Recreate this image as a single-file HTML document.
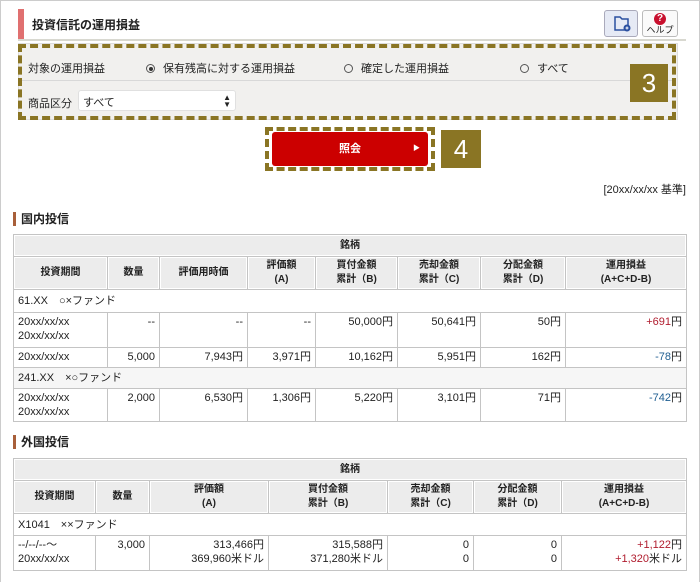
<!DOCTYPE html>
<html><head><meta charset="utf-8"><style>
*{box-sizing:border-box;margin:0;padding:0}
body{width:700px;height:582px;overflow:hidden;background:#fff;font-family:"Liberation Sans","Noto Sans CJK JP",sans-serif;font-size:11px;color:#222;position:relative}
.frame{position:absolute;left:0;top:0;width:700px;height:582px;border:1px solid #ccc;border-bottom:none}
.abs{position:absolute}
table{border-collapse:collapse;table-layout:fixed;position:absolute;left:13px;width:673px}
td,th{border:1px solid #c4c4c4;padding:2px 4px;vertical-align:top;line-height:14px}
th{background:#ececec;font-weight:bold;text-align:center;vertical-align:middle;font-size:10px;box-shadow:inset 0 0 0 1px #fff}
td.r{text-align:right}
.red{color:#b01c2e}.blue{color:#1f5e91}
.dash{border:4px dashed #8a7524}
.num{background:#8a7524;color:#fff;font-size:26px;text-align:center;font-weight:normal}
.sec{font-weight:bold;font-size:12px;border-left:3px solid #a85f3a;padding-left:5px;line-height:14px}
.rad{display:inline-block;width:9px;height:9px;border:1px solid #555;border-radius:50%;vertical-align:-1px;margin-right:8px;position:relative}
.rad.on::after{content:"";position:absolute;left:1.5px;top:1.5px;width:4px;height:4px;background:#333;border-radius:50%}
</style></head><body>
<div class="frame"></div>
<div class="abs" style="left:18px;top:9px;width:6px;height:30px;background:#e07070"></div>
<div class="abs" style="left:32px;top:16px;font-weight:bold;font-size:12px">投資信託の運用損益</div>
<div class="abs" style="left:18px;top:39px;width:668px;height:2px;background:#d8d8d0"></div>
<div class="abs" style="left:604px;top:10px;width:34px;height:27px;border:1px solid #aab;border-radius:3px;background:#e6eaf5">
<svg width="32" height="25" viewBox="0 0 32 25"><path d="M10 6h5l2 2h6v11H10z" fill="none" stroke="#2a4fa0" stroke-width="1.5"/><circle cx="22" cy="17" r="3.5" fill="#2a4fa0"/><path d="M20.5 17h3M22 15.5v3" stroke="#fff" stroke-width="1"/></svg></div>
<div class="abs" style="left:642px;top:10px;width:36px;height:27px;border:1px solid #bbb;border-radius:3px;background:#fafafa;text-align:center">
<div style="width:12px;height:12px;border-radius:50%;background:#c8102e;color:#fff;font-weight:bold;font-size:10px;line-height:12px;margin:2px auto 0">?</div><div style="font-size:9px;line-height:10px">ヘルプ</div></div>
<div class="abs" style="left:18px;top:43px;width:660px;height:77px;background:#f1f0ee;border:1px solid #ddd"></div>
<div class="abs" style="left:22px;top:80px;width:652px;height:1px;background:#d8d8d8"></div>
<div class="abs" style="left:28px;top:60px">対象の運用損益</div>
<div class="abs" style="left:146px;top:60px"><span class="rad on"></span>保有残高に対する運用損益</div>
<div class="abs" style="left:344px;top:60px"><span class="rad"></span>確定した運用損益</div>
<div class="abs" style="left:520px;top:60px"><span class="rad"></span>すべて</div>
<div class="abs" style="left:28px;top:95px">商品区分</div>
<div class="abs" style="left:78px;top:90px;width:158px;height:21px;background:#fff;border:1px solid #e0e0e0;border-radius:3px;padding:3px 4px">すべて<span style="position:absolute;right:4px;top:3px;font-size:8px;line-height:7px">▲<br>▼</span></div>
<div class="abs" style="left:18px;top:44px;width:658px;height:76px;border:4px dashed #8a7524;background:transparent"></div>
<div class="abs num" style="left:630px;top:64px;width:38px;height:38px;line-height:38px">3</div>
<div class="abs dash" style="left:265px;top:127px;width:170px;height:44px"></div>
<div class="abs" style="left:272px;top:132px;width:156px;height:34px;background:#cc0000;border-radius:3px;color:#fff;font-weight:bold;text-align:center;line-height:34px">照会<span style="position:absolute;right:8px;font-size:7px">▶</span></div>
<div class="abs num" style="left:441px;top:130px;width:40px;height:38px;line-height:38px">4</div>
<div class="abs" style="right:14px;top:181px;font-size:11px">[20xx/xx/xx 基準]</div>
<div class="abs sec" style="left:13px;top:212px">国内投信</div>
<table style="top:234px">
<colgroup><col style="width:94px"><col style="width:52px"><col style="width:88px"><col style="width:68px"><col style="width:82px"><col style="width:83px"><col style="width:85px"><col style="width:121px"></colgroup>
<tr style="height:22px"><th colspan="8">銘柄</th></tr>
<tr style="height:32px"><th>投資期間</th><th>数量</th><th>評価用時価</th><th>評価額<br>(A)</th><th>買付金額<br>累計（B)</th><th>売却金額<br>累計（C)</th><th>分配金額<br>累計（D)</th><th>運用損益<br>(A+C+D-B)</th></tr>
<tr style="height:23px"><td colspan="8" style="vertical-align:middle">61.XX　○×ファンド</td></tr>
<tr style="height:35px"><td>20xx/xx/xx<br>20xx/xx/xx</td><td class="r">--</td><td class="r">--</td><td class="r">--</td><td class="r">50,000円</td><td class="r">50,641円</td><td class="r">50円</td><td class="r"><span class="red">+691</span>円</td></tr>
<tr style="height:20px"><td>20xx/xx/xx</td><td class="r">5,000</td><td class="r">7,943円</td><td class="r">3,971円</td><td class="r">10,162円</td><td class="r">5,951円</td><td class="r">162円</td><td class="r"><span class="blue">-78</span>円</td></tr>
<tr style="height:21px;background:#f6f6f6"><td colspan="8" style="vertical-align:middle">241.XX　×○ファンド</td></tr>
<tr style="height:33px"><td>20xx/xx/xx<br>20xx/xx/xx</td><td class="r">2,000</td><td class="r">6,530円</td><td class="r">1,306円</td><td class="r">5,220円</td><td class="r">3,101円</td><td class="r">71円</td><td class="r"><span class="blue">-742</span>円</td></tr>
</table>
<div class="abs sec" style="left:13px;top:435px">外国投信</div>
<table style="top:458px">
<colgroup><col style="width:82px"><col style="width:54px"><col style="width:119px"><col style="width:119px"><col style="width:86px"><col style="width:88px"><col style="width:125px"></colgroup>
<tr style="height:22px"><th colspan="7">銘柄</th></tr>
<tr style="height:33px"><th>投資期間</th><th>数量</th><th>評価額<br>(A)</th><th>買付金額<br>累計（B)</th><th>売却金額<br>累計（C)</th><th>分配金額<br>累計（D)</th><th>運用損益<br>(A+C+D-B)</th></tr>
<tr style="height:22px"><td colspan="7" style="vertical-align:middle">X1041　××ファンド</td></tr>
<tr style="height:35px"><td>--/--/--～<br>20xx/xx/xx</td><td class="r">3,000</td><td class="r">313,466円<br>369,960米ドル</td><td class="r">315,588円<br>371,280米ドル</td><td class="r">0<br>0</td><td class="r">0<br>0</td><td class="r"><span class="red">+1,122</span>円<br><span class="red">+1,320</span>米ドル</td></tr>
</table>
</body></html>
